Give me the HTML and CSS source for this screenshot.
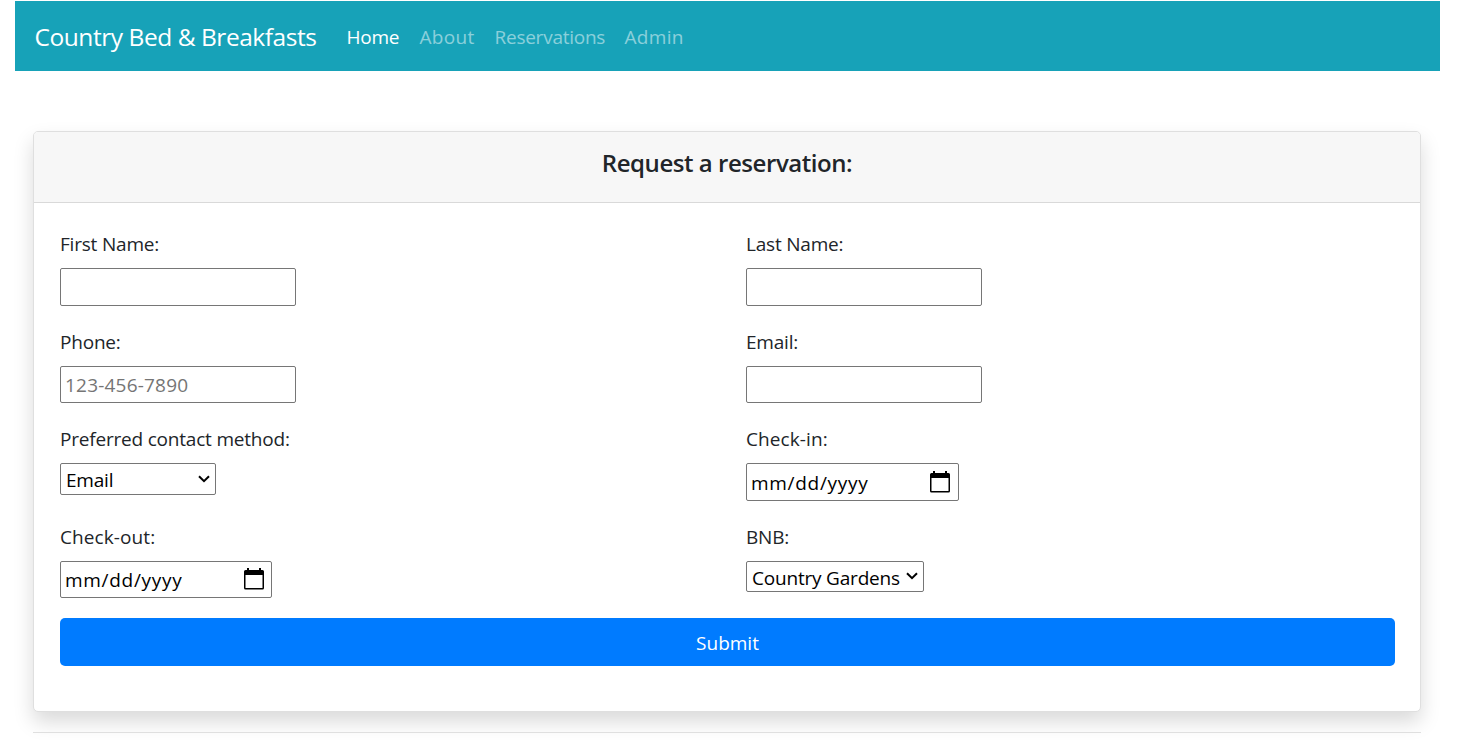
FILE: index.html
```html
<!DOCTYPE html>
<html lang="en">
<head>
<meta charset="utf-8">
<title>Country Bed &amp; Breakfasts</title>
<link rel="stylesheet" href="styles.css">
</head>
<body>
<nav class="navbar">
  <a class="brand">Country Bed &amp; Breakfasts</a>
  <a class="nav-link active w-home">Home</a>
  <a class="nav-link w-about">About</a>
  <a class="nav-link w-reservations">Reservations</a>
  <a class="nav-link w-admin">Admin</a>
</nav>
<main class="content">
  <section class="card">
    <header class="card-header"><h1 class="title">Request a reservation:</h1></header>
    <form class="card-body">
      <div class="fields">
        <div class="field"><label class="label" for="first">First Name:</label><input class="control" id="first" type="text"></div>
        <div class="field"><label class="label" for="last">Last Name:</label><input class="control" id="last" type="text"></div>
        <div class="field"><label class="label" for="phone">Phone:</label><input class="control phone" id="phone" type="text" placeholder="123-456-7890"></div>
        <div class="field"><label class="label" for="email">Email:</label><input class="control" id="email" type="text"></div>
        <div class="field"><label class="label" for="method">Preferred contact method:</label>
          <div class="select method"><select class="select-input" id="method"><option>Email</option></select><svg class="chevron" viewBox="0 0 12 8"><path d="M1 1.2 6 6.2 11 1.2"/></svg></div></div>
        <div class="field"><label class="label hyphenated" for="checkin">Check-in:</label>
          <div class="date"><input class="date-input" id="checkin" type="text" placeholder="mm/dd/yyyy"><svg class="calendar" viewBox="0 0 20 22"><path fill-rule="evenodd" d="M3 0h2v2h10V0h2v2h1.500Q20 2 20 3.500V20q0 1.500-1.500 1.500h-17Q0 21.500 0 20V3.500Q0 2 1.500 2H3zM1.500 7v13h17V7z"/></svg></div></div>
        <div class="field"><label class="label hyphenated" for="checkout">Check-out:</label>
          <div class="date checkout"><input class="date-input" id="checkout" type="text" placeholder="mm/dd/yyyy"><svg class="calendar" viewBox="0 0 20 22"><path fill-rule="evenodd" d="M3 0h2v2h10V0h2v2h1.500Q20 2 20 3.500V20q0 1.500-1.500 1.500h-17Q0 21.500 0 20V3.500Q0 2 1.500 2H3zM1.500 7v13h17V7z"/></svg></div></div>
        <div class="field"><label class="label" for="bnb">BNB:</label>
          <div class="select bnb"><select class="select-input" id="bnb"><option>Country Gardens</option></select><svg class="chevron" viewBox="0 0 12 8"><path d="M1 1.2 6 6.2 11 1.2"/></svg></div></div>
      </div>
      <button class="submit" type="button">Submit</button>
    </form>
  </section>
  <hr class="rule">
</main>
</body>
</html>
```

FILE: styles.css
```css
* { box-sizing: border-box; }
body {
  margin: 0;
  padding: 1px 24px 0 15px;
  height: 740px;
  overflow: hidden;
  background: #fff;
  color: #212529;
  font: 400 19px/30px "Open Sans", "Noto Sans", sans-serif;
  letter-spacing: -0.2px;
}
.navbar {
  display: flex;
  align-items: center;
  height: 70px;
  padding: 2px 20px 0 19.5px;
  background: #17a2b8;
}
.brand { width: 312px; color: #fff; font-size: 24.5px; letter-spacing: -0.45px; white-space: nowrap; }
.nav-link { color: rgba(255, 255, 255, .5); letter-spacing: -0.25px; white-space: nowrap; }
.nav-link.active { color: #fff; }
.w-home { width: 73px; }
.w-about { width: 75px; letter-spacing: 0.3px; }
.w-reservations { width: 130px; }
.w-admin { letter-spacing: 0.3px; }
.content { padding: 60px 19px 0 18px; }
.card {
  height: 581px;
  border: 1px solid #dfdfdf;
  border-radius: 5px;
  background: #fff;
  box-shadow: 0 10px 20px rgba(0, 0, 0, .15);
}
.card-header {
  height: 71px;
  padding-top: 16px;
  border-bottom: 1px solid #d9d9d9;
  border-radius: 4px 4px 0 0;
  background: #f7f7f7;
  text-align: center;
}
.title { margin: 0; font-size: 24px; line-height: 30px; font-weight: 600; letter-spacing: -0.45px; }
.card-body { padding: 25px 25px 0 26px; }
.fields { display: grid; grid-template-columns: 686px 1fr; grid-auto-rows: 97.5px; }
.field { display: flex; flex-direction: column; align-items: flex-start; }
.label { height: 40px; padding-top: 1px; white-space: nowrap; }
.hyphenated { letter-spacing: 0.1px; }
.control, .date, .select {
  border: 1px solid #767676;
  border-radius: 2px;
  background: #fff;
}
.control { width: 236px; height: 37.5px; padding: 1px 4px 0; font: inherit; letter-spacing: inherit; }
.phone { letter-spacing: 0.2px; }
.control::placeholder { color: #757575; opacity: 1; }
.date { display: flex; align-items: center; width: 213px; height: 37.5px; padding: 0 8px 0 4px; }
.checkout { width: 212px; padding-right: 7px; }
.date-input { flex: 1; min-width: 0; height: 30px; padding: 2px 0 0; border: 0; background: none; font: inherit; letter-spacing: 0.7px; }
.date-input::placeholder { color: #000; opacity: 1; }
.calendar { width: 20px; height: 22px; fill: #000; }
.select { display: flex; align-items: center; height: 31.5px; padding: 0 5px; }
.method { width: 156px; }
.bnb { width: 178px; }
.select-input { flex: 1; min-width: 0; height: 29px; padding: 1px 0 0; border: 0; appearance: none; background: none; color: #000; font: inherit; letter-spacing: -0.2px; }
.chevron { width: 12px; height: 8px; fill: none; stroke: #000; stroke-width: 2; }
.submit {
  display: block;
  width: 100%;
  height: 48px;
  padding: 2px 0 0;
  border: 0;
  border-radius: 5px;
  background: #007bff;
  color: #fff;
  font: inherit;
  letter-spacing: 0;
}
.rule { margin: 20px 0 0; border: 0; border-top: 1px solid #dfdfdf; }
```
